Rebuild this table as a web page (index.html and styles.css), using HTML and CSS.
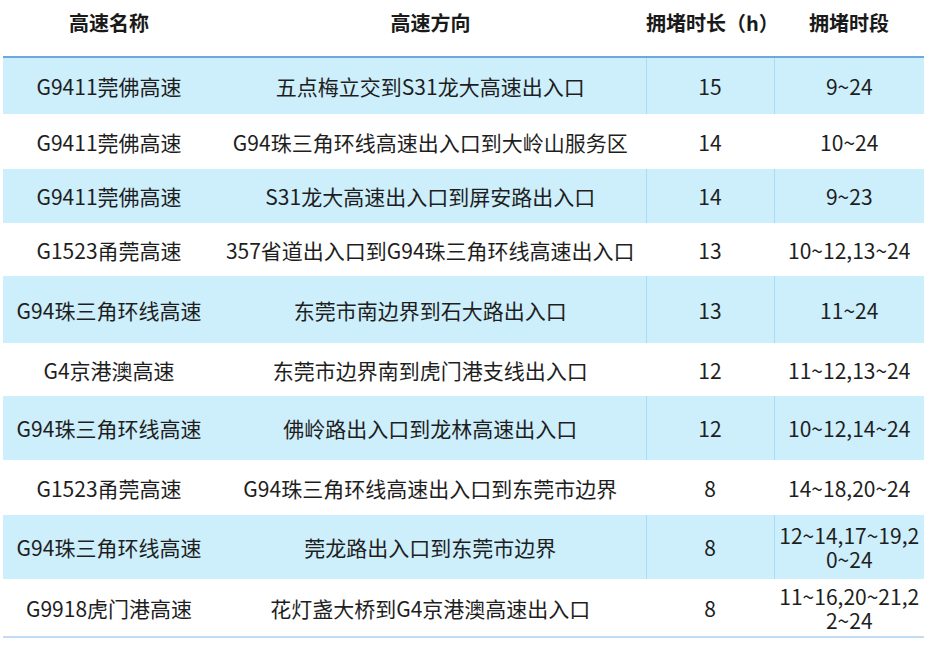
FILE: index.html
```html
<!DOCTYPE html>
<html lang="zh-CN">
<head>
<meta charset="utf-8">
<title>拥堵高速</title>
<link rel="stylesheet" href="styles.css">
</head>
<body>
<table class="jam">
  <colgroup>
    <col class="c-name">
    <col class="c-dir">
    <col class="c-dur">
    <col class="c-time">
  </colgroup>
  <thead>
    <tr>
      <th>高速名称</th>
      <th>高速方向</th>
      <th>拥堵时长（h）</th>
      <th>拥堵时段</th>
    </tr>
  </thead>
  <tbody>
    <tr class="alt h56"><td>G9411莞佛高速</td><td>五点梅立交到S31龙大高速出入口</td><td class="sep">15</td><td class="sep">9~24</td></tr>
    <tr class="h55"><td>G9411莞佛高速</td><td>G94珠三角环线高速出入口到大岭山服务区</td><td class="sep">14</td><td class="sep">10~24</td></tr>
    <tr class="alt h54"><td>G9411莞佛高速</td><td>S31龙大高速出入口到屏安路出入口</td><td class="sep">14</td><td class="sep">9~23</td></tr>
    <tr class="h53"><td>G1523甬莞高速</td><td>357省道出入口到G94珠三角环线高速出入口</td><td class="sep">13</td><td class="sep">10~12,13~24</td></tr>
    <tr class="alt h67"><td>G94珠三角环线高速</td><td>东莞市南边界到石大路出入口</td><td class="sep">13</td><td class="sep">11~24</td></tr>
    <tr class="h53"><td>G4京港澳高速</td><td>东莞市边界南到虎门港支线出入口</td><td class="sep">12</td><td class="sep">11~12,13~24</td></tr>
    <tr class="alt h64"><td>G94珠三角环线高速</td><td>佛岭路出入口到龙林高速出入口</td><td class="sep">12</td><td class="sep">10~12,14~24</td></tr>
    <tr class="h55"><td>G1523甬莞高速</td><td>G94珠三角环线高速出入口到东莞市边界</td><td class="sep">8</td><td class="sep">14~18,20~24</td></tr>
    <tr class="alt h64"><td>G94珠三角环线高速</td><td>莞龙路出入口到东莞市边界</td><td class="sep">8</td><td class="sep wrap">12~14,17~19,20~24</td></tr>
    <tr class="h57 last"><td>G9918虎门港高速</td><td>花灯盏大桥到G4京港澳高速出入口</td><td class="sep">8</td><td class="sep wrap">11~16,20~21,22~24</td></tr>
  </tbody>
</table>
</body>
</html>
```

FILE: styles.css
```css
html, body {
  margin: 0;
  padding: 0;
  background: #ffffff;
}

body {
  font-family: "Noto Sans CJK SC", "Noto Sans", sans-serif;
  color: #1e1e1e;
}

.jam {
  margin-left: 3px;
  width: 921px;
  border-collapse: collapse;
  table-layout: fixed;
}

.c-name { width: 212px; }
.c-dir { width: 431px; }
.c-dur { width: 128px; }
.c-time { width: 150px; }

.jam th {
  height: 57px;
  box-sizing: border-box;
  padding: 9px 0 0;
  vertical-align: top;
  font-size: 20px;
  font-weight: 700;
  line-height: 28px;
  white-space: nowrap;
  text-align: center;
  border-bottom: 2px solid #6fa7de;
  color: #1a1a1a;
}

.jam td {
  padding: 0 2px;
  text-align: center;
  vertical-align: middle;
  font-size: 21px;
  line-height: 24px;
  white-space: nowrap;
}

.jam td.sep {
  border-left: 1px solid #ffffff;
}

.jam tr.alt td {
  background: #cdeefb;
}

.jam tr.alt td.sep {
  border-left-color: #a6def7;
}

.jam td.wrap {
  white-space: normal;
  word-break: break-all;
}

.jam tr.last td {
  border-bottom: 2px solid #c3dbf3;
}

.h53 td { height: 53px; }
.h54 td { height: 54px; }
.h55 td { height: 55px; }
.h56 td { height: 56px; }
.h57 td { height: 57px; }
.h64 td { height: 64px; }
.h67 td { height: 67px; }
```
